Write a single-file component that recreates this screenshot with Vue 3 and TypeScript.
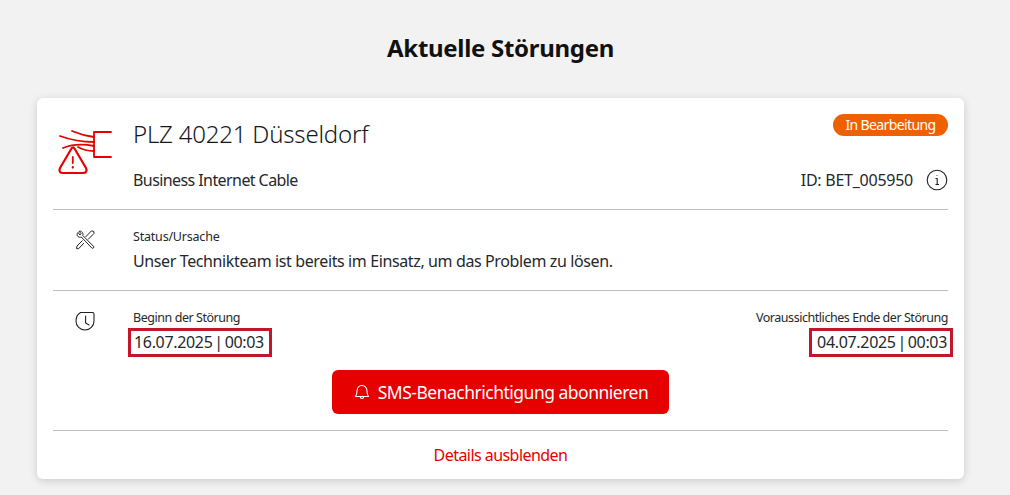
<script setup lang="ts">
const title = 'Aktuelle Störungen'
</script>

<template>
  <main class="page">
    <h1 class="title">{{ title }}</h1>
    <section class="card">
      <div class="row head">
        <svg class="ico-cable" width="58" height="50" viewBox="0 0 58 50" fill="none" stroke="#e60000" stroke-width="1.800" stroke-linecap="round" stroke-linejoin="round">
          <path d="M54 7H37V32H54" />
          <path d="M15 6C22 9 29 11 37 12" />
          <path d="M3 11C14 15 26 17 37 17" />
          <path d="M6 23C16 19 27 19 37 21" />
          <path d="M21 22C26 25 31 26 37 26" />
          <path d="M14.500 23.500L3 43C1.500 46 3 48 6 48H26C29 48 30.500 46 29 43L17.500 23.500C16.800 22 15.200 22 14.500 23.500Z" stroke-width="2.200" />
          <path d="M15.800 32V38" />
          <path d="M15.800 42V42.600" stroke-width="2.200" />
        </svg>
        <div class="head-main">
          <div class="head-top">
            <h2 class="plz">PLZ 40221 Düsseldorf</h2>
            <span class="badge">In Bearbeitung</span>
          </div>
          <div class="head-bottom">
            <span class="product">Business Internet Cable</span>
            <span class="id">ID: BET_005950
              <svg width="22" height="22" viewBox="0 0 22 22" fill="none" stroke="#222" stroke-width="1.100">
                <circle cx="11" cy="11" r="9.800" />
                <path d="M9.500 9.500H11.200V15.500M9.500 15.500H13M10.600 6.500H11.400" />
              </svg>
            </span>
          </div>
        </div>
      </div>
      <div class="row status">
        <svg class="ico" width="24" height="24" viewBox="0 0 24 24" fill="none" stroke="#222" stroke-width="1" stroke-linejoin="round">
          <path d="M5 4.500C3.800 5.800 3.800 7.600 5 8.600C6 9.400 7.300 9.400 8.300 9L18.800 20C19.800 21 21.500 19.500 20.500 18.300L9.800 7.500C10.200 6 9.800 4.600 8.600 3.700C7.800 3.100 6.800 3 6 3.300L8 5.500L7 7L5 4.500Z" />
          <path d="M20.800 3.500L18.500 2.800L12.500 9M9.500 12.500L4 18L3.500 20.500L5.500 20.800L11 15M20.800 3.500L21 5.500L15 11.500" />
        </svg>
        <div class="col">
          <div class="small label-status">Status/Ursache</div>
          <div class="text">Unser Technikteam ist bereits im Einsatz, um das Problem zu lösen.</div>
        </div>
      </div>
      <div class="row times">
        <svg class="ico" width="24" height="24" viewBox="0 0 24 24" fill="none" stroke="#222" stroke-width="1.100" stroke-linecap="round">
          <path d="M7.500 3.500H19.500C20.800 3.500 21 4 21 5V12C21 17 17 21 12 21C7 21 3 17 3 12C3 8 5 5 7.500 3.500Z" />
          <path d="M12.600 7V14L16 16" />
        </svg>
        <div class="col">
          <div class="dates">
            <div>
              <div class="small">Beginn der Störung</div>
              <div class="mark">16.07.2025 | 00:03</div>
            </div>
            <div class="right">
              <div class="small">Voraussichtliches Ende der Störung</div>
              <div class="mark">04.07.2025 | 00:03</div>
            </div>
          </div>
        </div>
      </div>
      <div class="action">
        <button class="sms" type="button">
          <svg width="18" height="18" viewBox="0 0 18 18" fill="none" stroke="#fff" stroke-width="1.100" stroke-linejoin="round">
            <path d="M2.500 13.500C3.800 12 4 10.500 4 8C4 5 6 2.500 9 2.500C12 2.500 14 5 14 8C14 10.500 14.200 12 15.500 13.500Z" />
            <path d="M7.300 13.800C7.300 16 10.700 16 10.700 13.800" />
          </svg>
          SMS-Benachrichtigung abonnieren
        </button>
      </div>
      <div class="footer">Details ausblenden</div>
    </section>
  </main>
</template>

<style>
html, body { margin: 0; background: #f2f2f2; }
</style>

<style scoped>
.page {
  height: 495px;
  overflow: hidden;
  padding: 31px 46px 0 37px;
  box-sizing: border-box;
  font-family: "Noto Sans", "Lato", sans-serif;
  color: #25282b;
}
.title {
  margin: 0 0 33px;
  height: 34px;
  line-height: 34px;
  text-align: center;
  font-size: 24px;
  font-weight: 700;
  letter-spacing: -0.3px;
  color: #111;
}
.card {
  background: #fff;
  border-radius: 6px;
  box-shadow: 0 2px 8px rgba(0, 0, 0, 0.16);
  padding: 0 16px;
  height: 381px;
  box-sizing: border-box;
}
.row { display: flex; }
.head { height: 111px; border-bottom: 1px solid #bebebe; }
.ico-cable { flex: none; margin: 27px 18px 0 4px; }
.head-main { flex: 1; padding-top: 14px; }
.head-top { display: flex; justify-content: space-between; align-items: flex-start; }
.plz { margin: 6px 0 0; font-size: 24px; font-weight: 300; line-height: 32px; letter-spacing: -0.2px; color: #15181b; }
.badge {
  background: #ee6100;
  color: #fff;
  font-size: 14px;
  line-height: 22px;
  padding: 0 12.500px;
  border-radius: 11px;
  margin-top: 2px;
  letter-spacing: -0.62px;
}
.head-bottom {
  display: flex;
  justify-content: space-between;
  align-items: center;
  margin-top: 19px;
  font-size: 16px;
}
.product { letter-spacing: -0.58px; }
.id { display: flex; align-items: center; gap: 13px; letter-spacing: -0.25px; }
.status { height: 80px; border-bottom: 1px solid #bebebe; }
.ico { flex: none; margin: 18px 36px 0 20px; }
.col { flex: 1; padding-top: 19px; min-width: 0; }
.small { font-size: 12.500px; line-height: 16px; letter-spacing: -0.45px; }
.label-status { letter-spacing: -0.2px; }
.text { font-size: 16px; line-height: 22px; margin-top: 5px; letter-spacing: -0.38px; }
.times { height: 79px; }
.dates { display: flex; justify-content: space-between; }
.right { text-align: right; }
.mark {
  display: inline-block;
  box-sizing: border-box;
  width: 144px;
  margin: 2px -5px 0;
  border: 3px solid #c4162a;
  padding: 0 3px;
  line-height: 23px;
  font-size: 16px;
  letter-spacing: -0.33px;
  word-spacing: -2px;
}
.action { display: flex; justify-content: center; height: 60px; border-bottom: 1px solid #bebebe; }
.sms {
  width: 337px;
  height: 44px;
  border: 0;
  border-radius: 6px;
  background: #e60000;
  color: #fff;
  font: inherit;
  font-size: 17.500px;
  letter-spacing: -0.5px;
  display: flex;
  align-items: center;
  justify-content: center;
  gap: 7px;
}
.footer { text-align: center; color: #e60000; font-size: 16px; letter-spacing: -0.55px; line-height: 22px; padding-top: 13px; }
</style>
